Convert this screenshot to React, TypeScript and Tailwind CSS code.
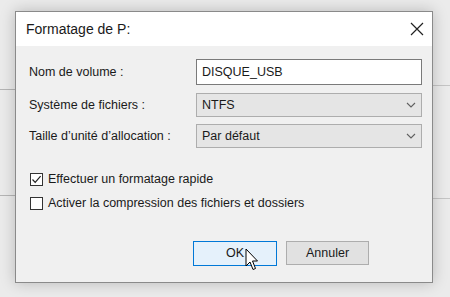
import React from 'react';

const font = { fontFamily: '"Liberation Sans", Arial, sans-serif' };

function Chevron() {
  return (
    <svg width="10" height="6" viewBox="0 0 10 6" className="text-[#606060]">
      <path d="M1 1 L5 5 L9 1" fill="none" stroke="currentColor" strokeWidth="1.1" />
    </svg>
  );
}

function Combo({ value }: { value: string }) {
  return (
    <div className="w-[226px] h-[24px] bg-[#e5e5e5] border border-[#adadad] flex items-center justify-between pl-[5px] pr-[5px]">
      <span className="text-[12.5px] text-[#1a1a1a] leading-none">{value}</span>
      <Chevron />
    </div>
  );
}

function Checkbox({ checked, label }: { checked?: boolean; label: string }) {
  return (
    <div className="flex items-center h-[13px]">
      <div className="w-[13px] h-[13px] border border-[#333] bg-white flex items-center justify-center">
        {checked && (
          <svg width="11" height="11" viewBox="0 0 11 11">
            <path d="M1.5 5.5 L4.2 8.3 L9.6 2.2" fill="none" stroke="#222" strokeWidth="1.2" />
          </svg>
        )}
      </div>
      <span className="ml-[5px] text-[12.5px] text-[#1a1a1a] leading-none">{label}</span>
    </div>
  );
}

export default function App() {
  return (
    <div className="relative w-[450px] h-[297px] bg-[#ebebeb] overflow-hidden pt-[11px] pl-[15px]" style={font}>
      <div className="absolute left-0 top-[89px] w-[15px] h-px bg-[#b5b5b5]" />
      <div className="absolute left-0 top-[195px] w-[15px] h-px bg-[#b5b5b5]" />
      <div className="absolute right-0 top-[85px] w-[17px] h-px bg-[#c5c5c5]" />
      <div className="absolute right-0 top-[198px] w-[17px] h-px bg-[#c5c5c5]" />

      <div className="relative w-[418px] h-[272px] border border-[#8a8a8a] bg-[#f0f0f0] shadow-[0_0_14px_rgba(0,0,0,0.22)] flex flex-col">
        <div className="h-[34px] bg-white flex items-center justify-between pl-[10px] pr-[8px]">
          <span className="text-[14px] text-[#1a1a1a]">Formatage de P:</span>
          <svg width="14" height="14" viewBox="0 0 14 14">
            <path d="M1 1 L13 13 M13 1 L1 13" stroke="#222" strokeWidth="1.2" />
          </svg>
        </div>

        <div className="flex flex-col pl-[13px] pr-[10px] pt-[13px]">
          <div className="flex items-center justify-between h-[26px]">
            <span className="text-[12.5px] text-[#1a1a1a]">Nom de volume :</span>
            <div className="w-[226px] h-[26px] bg-white border border-[#7a7a7a] flex items-center pl-[5px]">
              <span className="text-[12.5px] text-[#1a1a1a] leading-none">DISQUE_USB</span>
            </div>
          </div>
          <div className="flex items-center justify-between mt-[8px]">
            <span className="text-[12.5px] text-[#1a1a1a]">Système de fichiers :</span>
            <Combo value="NTFS" />
          </div>
          <div className="flex items-center justify-between mt-[7px]">
            <span className="text-[12.5px] text-[#1a1a1a]">Taille d’unité d’allocation :</span>
            <Combo value="Par défaut" />
          </div>

          <div className="flex flex-col gap-[11px] mt-[25px] pl-[1px]">
            <Checkbox checked label="Effectuer un formatage rapide" />
            <Checkbox label="Activer la compression des fichiers et dossiers" />
          </div>

          <div className="flex justify-end gap-[9px] mt-[31px] pr-[53px]">
            <div className="w-[84px] h-[25px] border border-[#0078d7] bg-[#e5f1fb] flex items-center justify-center">
              <span className="text-[12.5px] text-[#1a1a1a] leading-none">OK</span>
            </div>
            <div className="w-[83px] h-[24px] border border-[#adadad] bg-[#e1e1e1] flex items-center justify-center">
              <span className="text-[12.5px] text-[#1a1a1a] leading-none">Annuler</span>
            </div>
          </div>
        </div>
      </div>

      <svg className="absolute left-[245px] top-[248px]" width="14" height="23" viewBox="0 0 14 23">
        <path d="M1 1 L1 18 L5 14 L8 21.5 L10.5 20.5 L7.5 13 L12.5 13 Z" fill="#fff" stroke="#000" strokeWidth="1" strokeLinejoin="round" />
      </svg>
    </div>
  );
}
